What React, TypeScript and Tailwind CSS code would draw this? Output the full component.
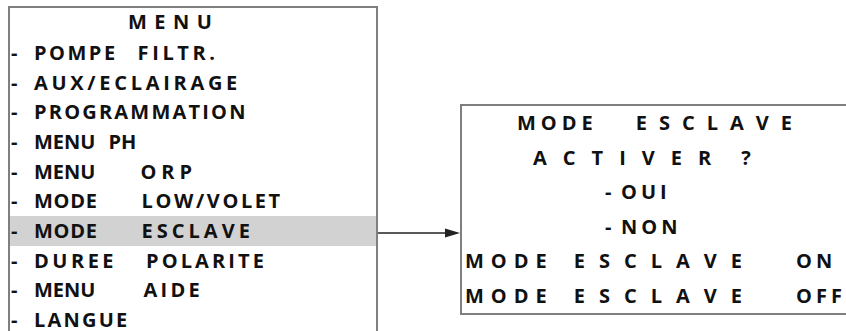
import React from 'react'

type Word = { text: string; track: string }
type Row = { words: Word[]; gap: string; highlight?: boolean }

const w = (text: string, track: string): Word => ({ text, track })

const menuRows: Row[] = [
  { words: [w('POMPE', 'tracking-[2.5px]'), w('FILTR.', 'tracking-[3.6px]')], gap: 'gap-[20px]' },
  { words: [w('AUX/ECLAIRAGE', 'tracking-[3.7px]')], gap: 'gap-0' },
  { words: [w('PROGRAMMATION', 'tracking-[2.2px]')], gap: 'gap-0' },
  { words: [w('MENU', 'tracking-[0px]'), w('PH', 'tracking-[0px]')], gap: 'gap-[13px]' },
  { words: [w('MENU', 'tracking-[0px]'), w('ORP', 'tracking-[5px]')], gap: 'gap-[45px]' },
  { words: [w('MODE', 'tracking-[0.7px]'), w('LOW/VOLET', 'tracking-[2.6px]')], gap: 'gap-[44px]' },
  { words: [w('MODE', 'tracking-[0.7px]'), w('ESCLAVE', 'tracking-[4px]')], gap: 'gap-[44px]', highlight: true },
  { words: [w('DUREE', 'tracking-[3.5px]'), w('POLARITE', 'tracking-[3.1px]')], gap: 'gap-[29px]' },
  { words: [w('MENU', 'tracking-[0px]'), w('AIDE', 'tracking-[3.3px]')], gap: 'gap-[48px]' },
  { words: [w('LANGUE', 'tracking-[2.2px]')], gap: 'gap-0' },
]

function Words({ row }: { row: Row }) {
  return (
    <div className={`flex ${row.gap}`}>
      {row.words.map((word, i) => (
        <span key={i} className={word.track}>
          {word.text}
        </span>
      ))}
    </div>
  )
}

function MenuPanel() {
  return (
    <div className="ml-[8px] mt-[6px] w-[370px] h-[340px] shrink-0 border-2 border-b-0 border-[#7f7f7f]">
      <div className="h-[28px] flex items-center pl-[118px] tracking-[7.5px]">MENU</div>
      <div className="mt-[2px] flex flex-col">
        {menuRows.map((row, i) => (
          <div
            key={i}
            className={`h-[29.7px] flex items-center ${row.highlight ? 'bg-[#d2d2d2]' : ''}`}>
            <span className="w-[24px] pl-[1px]">-</span>
            <Words row={row} />
          </div>
        ))}
      </div>
    </div>
  )
}

function Arrow() {
  return (
    <svg className="mt-[227px] shrink-0" width="82" height="12" viewBox="0 0 82 12">
      <line x1="0" y1="6" x2="70" y2="6" stroke="#222" strokeWidth="1.6" />
      <polygon points="67,1.5 82,6 67,10.5" fill="#222" />
    </svg>
  )
}

function SlavePanel() {
  return (
    <div className="mt-[104px] w-[420px] h-[211px] shrink-0 border-2 border-r-0 border-[#7f7f7f] flex flex-col">
      <div className="h-[34.5px] flex items-center pl-[55px]">
        <Words row={{ words: [w('MODE', 'tracking-[5px]'), w('ESCLAVE', 'tracking-[12px]')], gap: 'gap-[38px]' }} />
      </div>
      <div className="h-[34.5px] flex items-center pl-[71px]">
        <Words row={{ words: [w('ACTIVER', 'tracking-[16px]'), w('?', 'tracking-[0px]')], gap: 'gap-[14px]' }} />
      </div>
      <div className="h-[34.5px] flex items-center pl-[143px]">
        <span className="w-[16px]">-</span>
        <span className="tracking-[4px]">OUI</span>
      </div>
      <div className="h-[34.5px] flex items-center pl-[143px]">
        <span className="w-[16px]">-</span>
        <span className="tracking-[4px]">NON</span>
      </div>
      <div className="h-[34.5px] flex items-center pl-[3px]">
        <Words
          row={{
            words: [w('MODE', 'tracking-[7px]'), w('ESCLAVE', 'tracking-[14px]'), w('ON', 'tracking-[4px] ml-[20px]')],
            gap: 'gap-[20px]',
          }}
        />
      </div>
      <div className="h-[34.5px] flex items-center pl-[3px]">
        <Words
          row={{
            words: [w('MODE', 'tracking-[7px]'), w('ESCLAVE', 'tracking-[14px]'), w('OFF', 'tracking-[4px] ml-[20px]')],
            gap: 'gap-[20px]',
          }}
        />
      </div>
    </div>
  )
}

export default function App() {
  return (
    <div className="w-[846px] h-[331px] overflow-hidden bg-white flex items-start font-['Open_Sans',sans-serif] font-bold text-[20px] leading-none text-[#111111]">
      <MenuPanel />
      <Arrow />
      <SlavePanel />
    </div>
  )
}
